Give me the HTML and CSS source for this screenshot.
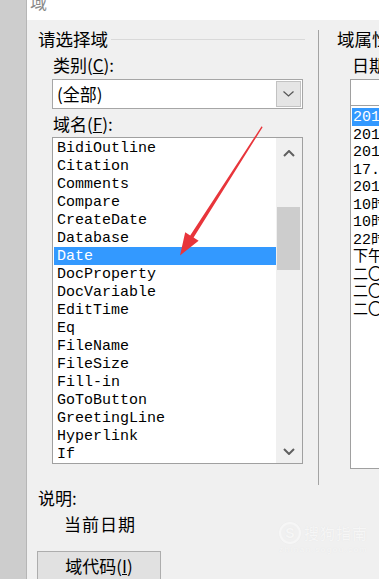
FILE: index.html
```html
<!DOCTYPE html>
<html lang="zh-CN">
<head>
<meta charset="utf-8">
<title>域</title>
<link rel="stylesheet" href="styles.css">
</head>
<body>
<div class="screen">
  <div class="strip"></div>
  <div class="dialog">
    <div class="titlebar"><span class="title">域</span></div>
    <div class="content">
      <div class="top">
        <div class="left">
          <div class="legend"><span>请选择域</span></div>
          <div class="label">类别(<u>C</u>):</div>
          <div class="combo">
            <span class="combo-text">(全部)</span>
            <span class="combo-btn"><svg width="11" height="6" viewBox="0 0 11 6"><polyline points="0.5,0.5 5.5,5 10.5,0.5" fill="none" stroke="#555" stroke-width="1.2"/></svg></span>
          </div>
          <div class="label label2">域名(<u>F</u>):</div>
          <div class="listbox">
            <div class="items">
              <div class="item">BidiOutline</div>
              <div class="item">Citation</div>
              <div class="item">Comments</div>
              <div class="item">Compare</div>
              <div class="item">CreateDate</div>
              <div class="item">Database</div>
              <div class="item sel">Date</div>
              <div class="item">DocProperty</div>
              <div class="item">DocVariable</div>
              <div class="item">EditTime</div>
              <div class="item">Eq</div>
              <div class="item">FileName</div>
              <div class="item">FileSize</div>
              <div class="item">Fill-in</div>
              <div class="item">GoToButton</div>
              <div class="item">GreetingLine</div>
              <div class="item">Hyperlink</div>
              <div class="item">If</div>
            </div>
            <div class="scroll">
              <div class="sb-btn sb-up"><svg width="12" height="7" viewBox="0 0 12 7"><polyline points="1,6 6,1 11,6" fill="none" stroke="#606060" stroke-width="2"/></svg></div>
              <div class="sb-track"><div class="thumb"></div></div>
              <div class="sb-btn sb-down"><svg width="12" height="7" viewBox="0 0 12 7"><polyline points="1,1 6,6 11,1" fill="none" stroke="#606060" stroke-width="2"/></svg></div>
            </div>
          </div>
        </div>
        <div class="sep"></div>
        <div class="right">
          <div class="legend-r">域属性</div>
          <div class="label-r">日期格式(<u>D</u>):</div>
          <div class="edit"></div>
          <div class="rlist">
            <div class="ritem sel">2017/10/22</div>
            <div class="ritem">2017年10月22日</div>
            <div class="ritem">2017-10-22</div>
            <div class="ritem">17.10.22</div>
            <div class="ritem">2017年10月</div>
            <div class="ritem">10时28分</div>
            <div class="ritem">10时28分56秒</div>
            <div class="ritem">22时28分</div>
            <div class="ritem">下午10时28分</div>
            <div class="ritem">二〇一七年十月二十二日</div>
            <div class="ritem">二〇一七年十月</div>
            <div class="ritem">二〇一七年十月二十二日星期日</div>
          </div>
        </div>
      </div>
      <div class="bottom">
        <div class="desc-label">说明:</div>
        <div class="desc">当前日期</div>
        <div class="btn">域代码(<u>I</u>)</div>
      </div>
    </div>
  </div>

  <svg class="arrow" width="379" height="579" viewBox="0 0 379 579">
    <polygon points="261.6,126.3 262.6,127.2 193.6,237.6 198.6,240.8 180,255.5 185.2,232.2 190.2,235.4" fill="#e8353b"/>
  </svg>

  <div class="watermark">
    <div class="wm-row">
      <span class="wm-logo">S</span>
      <span class="wm-name">搜狗指南</span>
    </div>
    <div class="wm-url">zhinan.sogou.com</div>
  </div>
</div>
</body>
</html>
```

FILE: styles.css
```css
html, body {
  margin: 0;
  padding: 0;
}

body {
  width: 379px;
  height: 579px;
  overflow: hidden;
  font-family: "Noto Sans CJK SC", "Noto Sans", sans-serif;
  color: #000;
  background: #f0f0f0;
}

.screen {
  position: relative;
  display: flex;
  width: 379px;
  height: 579px;
  overflow: hidden;
}

.strip {
  flex: none;
  width: 26px;
  background: #cdcdcd;
  border-right: 1px solid #b6b6b6;
}

.dialog {
  flex: 1;
  min-width: 0;
  display: flex;
  flex-direction: column;
}

.titlebar {
  flex: none;
  height: 20px;
  background: #fff;
  overflow: hidden;
}

.title {
  display: block;
  margin: -8px 0 0 3px;
  font-size: 17px;
  line-height: 20px;
  color: #8a8a8a;
}

.content {
  flex: 1;
  background: #f0f0f0;
}

.top {
  display: flex;
  align-items: flex-start;
}

.left {
  flex: none;
  width: 291px;
}

.legend {
  display: flex;
  align-items: center;
  height: 20px;
  margin: 9px 13px 0 0;
  padding-left: 11px;
  font-size: 17.5px;
  line-height: 20px;
  white-space: nowrap;
}

.legend::after {
  content: "";
  flex: 1;
  height: 1px;
  margin-left: 3px;
  background: #d9d9d9;
}

.label {
  margin-top: 6px;
  padding-left: 26px;
  font-size: 17px;
  line-height: 20px;
}

.label2 {
  margin-top: 5px;
}

.combo {
  display: flex;
  box-sizing: border-box;
  width: 251px;
  height: 30px;
  margin: 4px 0 0 25px;
  border: 1px solid #a6a6a6;
  background: #fff;
}

.combo-text {
  flex: 1;
  padding-left: 4px;
  font-size: 17px;
  line-height: 28px;
}

.combo-btn {
  display: flex;
  align-items: center;
  justify-content: center;
  width: 23px;
  margin: 1px 1px 1px 0;
  border: 1px solid #c2c2c2;
  background: #e5e5e5;
}

.listbox {
  display: flex;
  box-sizing: border-box;
  width: 251px;
  height: 327px;
  margin: 3px 0 0 25px;
  border: 1px solid #a0a0a0;
  background: #fff;
}

.items {
  flex: 1;
  min-width: 0;
  overflow: hidden;
  padding: 1px 0 0 1px;
  font-family: "Liberation Mono", "Noto Sans CJK SC", monospace;
  font-size: 15px;
  line-height: 20px;
}

.item {
  height: 18px;
  padding-left: 3px;
  white-space: nowrap;
}

.item.sel,
.ritem.sel {
  background: #3399ff;
  color: #fff;
}

.scroll {
  flex: none;
  display: flex;
  flex-direction: column;
  width: 26px;
  background: #f0f0f0;
}

.sb-btn {
  display: flex;
  align-items: center;
  justify-content: center;
}

.sb-up {
  height: 30px;
}

.sb-down {
  height: 24px;
}

.sb-track {
  flex: 1;
}

.thumb {
  height: 63px;
  margin: 39px 2px 0 1px;
  background: #cdcdcd;
}

.sep {
  flex: none;
  width: 1px;
  height: 455px;
  margin-top: 10px;
  background: #a3a3a3;
}

.right {
  flex: 1;
  min-width: 0;
  overflow: hidden;
}

.legend-r {
  margin-top: 9px;
  padding-left: 18px;
  font-size: 17.5px;
  line-height: 20px;
  white-space: nowrap;
}

.label-r {
  margin-top: 6px;
  padding-left: 33px;
  font-size: 17px;
  line-height: 20px;
  white-space: nowrap;
}

.edit {
  box-sizing: border-box;
  width: 200px;
  height: 26px;
  margin: 4px 0 0 31px;
  border: 1px solid #a0a0a0;
  border-bottom: 0;
  background: #fff;
}

.rlist {
  box-sizing: border-box;
  width: 200px;
  height: 364px;
  margin-left: 31px;
  padding: 2px 0 0 1px;
  border: 1px solid #a0a0a0;
  background: #fff;
  font-family: "Liberation Mono", "Noto Sans CJK SC", monospace;
  font-size: 15px;
  line-height: 19px;
}

.ritem {
  height: 17.5px;
  padding-left: 1px;
  white-space: nowrap;
}

.bottom {
  padding-top: 3px;
}

.desc-label {
  padding-left: 11px;
  font-size: 17px;
  line-height: 20px;
}

.desc {
  margin-top: 6px;
  padding-left: 37px;
  font-size: 17px;
  line-height: 20px;
  letter-spacing: 1px;
}

.btn {
  box-sizing: border-box;
  width: 124px;
  height: 30px;
  margin: 17px 0 0 10px;
  border: 1px solid #adadad;
  background: #e1e1e1;
  font-size: 17px;
  line-height: 28px;
  text-align: center;
}

.arrow {
  position: absolute;
  left: 0;
  top: 0;
  pointer-events: none;
}

.watermark {
  position: absolute;
  left: 279px;
  top: 522px;
  color: #f6f6f6;
  text-shadow: 0 0 1px #e2e2e2;
}

.wm-row {
  display: flex;
  align-items: center;
  gap: 3px;
}

.wm-logo {
  display: flex;
  align-items: center;
  justify-content: center;
  width: 18px;
  height: 18px;
  border: 2px solid #f6f6f6;
  border-radius: 50%;
  box-shadow: 0 0 1px #e2e2e2;
  font-family: "Liberation Sans", sans-serif;
  font-weight: bold;
  font-size: 14px;
}

.wm-name {
  font-size: 15px;
  line-height: 20px;
  letter-spacing: 1px;
}

.wm-url {
  margin-top: 1px;
  font-family: "Liberation Sans", sans-serif;
  font-size: 8px;
  line-height: 9px;
  letter-spacing: 1.5px;
}
```
